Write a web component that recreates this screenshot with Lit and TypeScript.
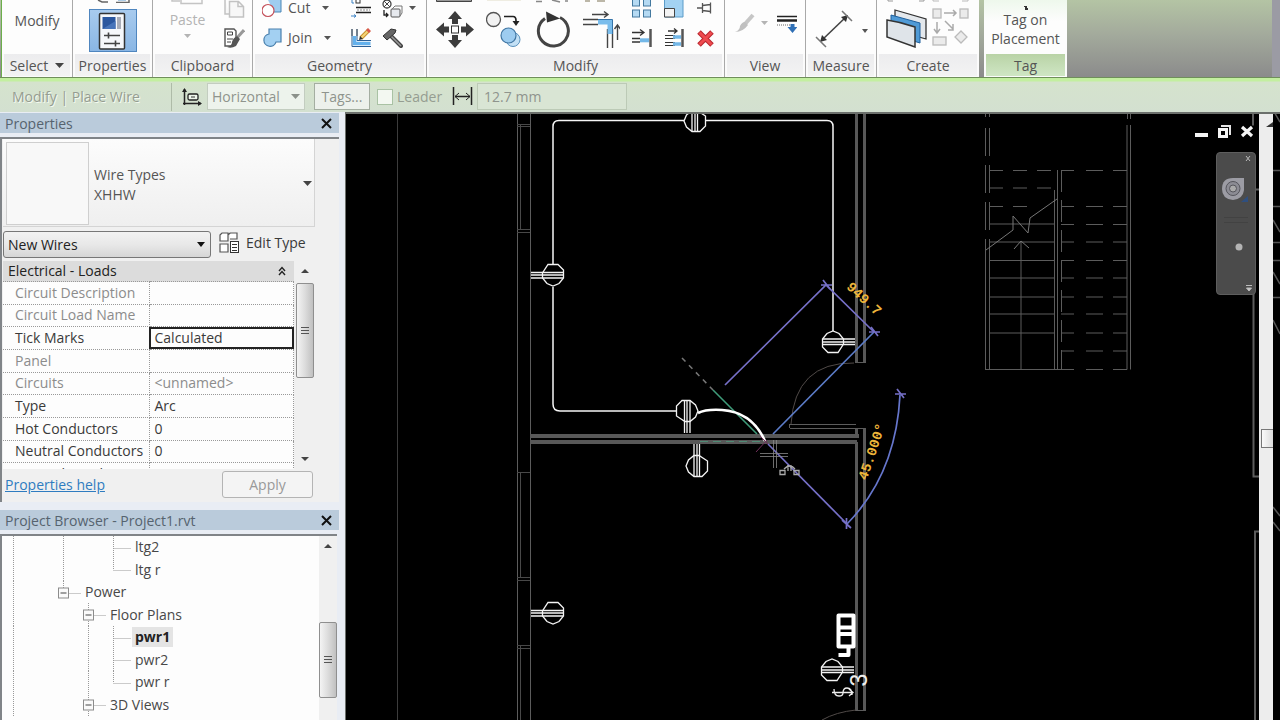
import { LitElement, html, svg, css, nothing, TemplateResult } from "lit";
import { customElement } from "lit/decorators.js";
import { classMap } from "lit/directives/class-map.js";

type Box = [number, number, number, number];

const icon = ([x, y, w, h]: Box, body: TemplateResult) =>
  html`<svg class="icon" width=${w} height=${h} viewBox="${x} ${y} ${w} ${h}" aria-hidden="true">${body}</svg>`;

const caret = html`<svg class="icon" width="7" height="4" viewBox="0 0 7 4" aria-hidden="true"><path d="M0 0h7L3.5 4z" fill="currentColor" /></svg>`;

const shared = css`
  * { box-sizing: border-box; }
  .icon { display: block; flex: none; }
  button {
    font: inherit; color: inherit; background: none; border: 0; padding: 0; margin: 0;
    display: flex; align-items: center;
  }
  .scroll {
    width: 18px; flex: none; background: #f0f0f0; color: #333;
    display: flex; flex-direction: column; align-items: center; justify-content: space-between;
    padding: 8px 0; position: relative;
  }
  .thumb {
    position: absolute; left: 0; width: 18px; border: 1px solid #8f8f8f; border-radius: 2px;
    background: linear-gradient(90deg, #f4f4f4, #dcdcdc 50%, #c0c0c0);
    display: flex; align-items: center; justify-content: center;
  }
  .titlebar {
    height: 20px; display: flex; align-items: center; justify-content: space-between;
    background: #bacbdb; color: #56636f; padding: 0 7px 0 5px; margin: 0 6px 0 0;
    font-size: 14px; font-weight: 400;
  }
  h2 { font: inherit; margin: 0; }
  .close { color: #111; }
`;

const grip = html`<svg class="icon" width="8" height="10" viewBox="0 0 8 10"><path d="M0 1.5h8M0 4.5h8M0 7.5h8" stroke="#555" /></svg>`;
const up = html`<svg class="icon" width="8" height="4" viewBox="0 0 8 4"><path d="M0 4h8L4 0z" fill="#444" /></svg>`;
const down = html`<svg class="icon" width="8" height="4" viewBox="0 0 8 4"><path d="M0 0h8L4 4z" fill="#444" /></svg>`;
const cross = html`<svg class="icon" width="11" height="11" viewBox="0 0 11 11"><path d="M1 1l9 9M10 1l-9 9" stroke="#111" stroke-width="2" /></svg>`;

@customElement("ribbon-bar")
class RibbonBar extends LitElement {
  static styles = [shared, css`
    :host {
      display: flex; height: 77px; overflow: hidden; color: #555; font-size: 14px;
      background: linear-gradient(180deg, #b4c4a4, #a3aa9c 45%, #8b8b8b);
      padding-left: 1px;
    }
    section { display: flex; flex-direction: column; border-right: 1px solid #a9a9a9; background: #fdfdfd; flex: none; }
    section:first-child { border-left: 1px solid #6cae4c; }
    .body { height: 54px; display: flex; align-items: flex-end; justify-content: center; padding-bottom: 6px; }
    h2 {
      height: 23px; margin: 0; font-size: 14px; font-weight: 400; line-height: 23px; text-align: center;
      background: linear-gradient(180deg, #ececee, #f3f3f3); border: solid #fbfbfb; border-width: 0 2px 1px;
      display: flex; gap: 7px; align-items: center; justify-content: center;
    }
    .select { width: 72px; } .properties { width: 80px; } .clipboard { width: 100px; }
    .geometry { width: 174px; } .modify { width: 298px; } .view { width: 81px; }
    .measure { width: 71px; } .create { width: 102px; border-right: 0; } .tag { width: 83px; margin-left: 5px; border-right: 0; }
    .tag h2 { background: linear-gradient(180deg, #b9d3a6, #cfe6c4); }
    .tag .body { background: linear-gradient(180deg, #eef8ec, #fdfdfd 40%); }
    .stack { display: flex; flex-direction: column; gap: 10px; }
    .row { gap: 6px; height: 20px; }
    .label { line-height: 20px; }
    .wide { gap: 8px; }
    .on { border: 1px solid #4f86bf; background: linear-gradient(180deg, #a8cbee, #8ab6e4); padding: 2px 8px; height: 43px; width: 48px; }
    .prop { padding-bottom: 2px; flex-direction: column; align-items: center; justify-content: flex-end; gap: 6px; }
    .dim { color: #b4b4b4; }
    .tall { flex-direction: column; justify-content: flex-end; text-align: center; line-height: 19px; }
    .paste { height: 48px; justify-content: flex-start; gap: 4px; line-height: 20px; padding-top: 0; }
    .end { flex: 1; border-right: 8px solid #9b9ba4; }
    .lift { padding-bottom: 24px; }
    .clip { gap: 18px; padding-left: 10px; }
    .geo { gap: 10px; justify-content: flex-start; padding-left: 9px; }
    .ops { width: 78px; }
    .mod { gap: 12px; justify-content: flex-start; padding-left: 9px; }
    .viewg { gap: 8px; align-items: flex-start; padding-bottom: 0; padding-top: 13px; }
    .viewg button { height: 20px; gap: 6px; }
  `];

  render() {
    return html`
      <section class="select">
        <div class="body lift"><button>Modify</button></div>
        <h2>Select <svg class="icon" width="9" height="5" viewBox="0 0 9 5"><path d="M0 0h9L4.500 5z" fill="#444" /></svg></h2>
      </section>
      <section class="properties">
        <div class="body prop">
          ${icon([96, 0, 34, 3], svg`<path d="M98 0l4 2h6M116 2.500h13V0" fill="none" stroke="#666" stroke-width="1.500"/><path d="M118 0h8" stroke="#5b9ad0"/>`)}
          <button class="on" aria-label="Properties">
            ${icon([97, 10, 28, 38], svg`
              <rect x="98.500" y="11.500" width="25" height="35.500" rx="1" fill="#f6f8fb" stroke="#333" stroke-width="1.500"/>
              <rect x="101.500" y="15" width="13" height="12" fill="#2b579f"/><path d="M101.500 27l13-8v8z" fill="#4774ba"/>
              <rect x="116" y="15" width="4" height="12" fill="#a9adb8"/>
              <path d="M103 33.500h16M103 41.500h16M107.500 30.500v6M114.500 38.500v6" stroke="#444" stroke-width="1.600"/>`)}
          </button>
        </div>
        <h2>Properties</h2>
      </section>
      <section class="clipboard">
        <div class="body clip">
          <button class="tall paste dim">
            ${icon([170, 0, 34, 6], svg`<path d="M172 0v1h8M181 0v3.500h21V0" fill="none" stroke="#c4c4c4" stroke-width="1.500"/>`)}
            <span class="label">Paste</span>${caret}
          </button>
          <div class="stack">
            <button aria-label="Copy">${icon([223, -2, 22, 20], svg`<path d="M225 -2v16h4M229.500 1.500h9l5 5v10.500h-14zM238 1.500v5h5" fill="#f7f7f7" stroke="#c2c2c2" stroke-width="1.500"/>`)}</button>
            <button aria-label="Match type">${icon([223, 28, 22, 20], svg`
              <path d="M225 29h9l2 2v9l-3 6h-8z" fill="#fff" stroke="#555" stroke-width="1.400"/><path d="M227.500 32h5v3h-5zM227 39h6M227 42h4" fill="none" stroke="#444"/>
              <path d="M244 30l-8 9" stroke="#999" stroke-width="3"/><path d="M237 36l3 3-4 7q-5 3-9 1 5-1 5-5 1-4 5-6z" fill="#555"/>`)}</button>
          </div>
        </div>
        <h2>Clipboard</h2>
      </section>
      <section class="geometry">
        <div class="body geo">
          <div class="stack ops">
            <button class="row">${icon([262, -2, 20, 20], svg`
              <path d="M267 -2h14v14h-7" fill="#9fcdf0" stroke="#4b86b5"/><circle cx="268" cy="10.500" r="6" fill="#fff" stroke="#c4505a" stroke-width="1.200"/>`)}
              <span class="label">Cut</span><span class="icon"></span>${caret}</button>
            <button class="row">${icon([262, 28, 20, 20], svg`
              <path d="M269 29h12v13h-5a6.200 6.200 0 1 1-7-8z" fill="#a3d0f2" stroke="#4a80ad" stroke-width="1.200"/>`)}
              <span class="label">Join</span><span class="icon"></span>${caret}</button>
          </div>
          <div class="stack">
            <button aria-label="Cope">${icon([350, -2, 22, 20], svg`
              <rect x="356" y="-1" width="4" height="4" fill="#fff" stroke="#333"/><path d="M352 0v3h2" stroke="#3c82c4" fill="none"/><path d="M356 7.500h15M356 12.500h15" stroke="#222" stroke-width="1.400"/><path d="M357 10h13" stroke="#888" stroke-dasharray="2 1"/><path d="M351 16h5l-2-1.500M356 16l-2 1.500" stroke="#3c82c4" fill="none"/>`)}</button>
            <button aria-label="Wall joins">${icon([350, 28, 22, 20], svg`
              <path d="M352 29v17.500h19M357 29v11.500h14" fill="none" stroke="#2b5f96"/><path d="M354.500 36v7.500h16" fill="none" stroke="#64b1ec" stroke-width="3.500"/><path d="M352 29v7M357 29v7" stroke="#555"/>
              <path d="M361 38l8-8" stroke="#c9912f" stroke-width="4"/><path d="M361 38l8-8" stroke="#f5d679" stroke-width="2"/><path d="M359 40l1-4 3 3z" fill="#333"/><path d="M367.500 31.500l2-2" stroke="#d9584e" stroke-width="4"/>`)}</button>
          </div>
          <div class="stack">
            <button class="row">${icon([382, -2, 21, 20], svg`
              <circle cx="387" cy="4" r="4" fill="#fff" stroke="#444" stroke-width="1.300"/><path d="M384 1l6 6M390 1l-6 6" stroke="#444"/>
              <rect x="391" y="9" width="9" height="8" rx="1" fill="#e6e9ee" stroke="#555"/><path d="M392 9l3-3h7v7l-2 3" fill="none" stroke="#777"/><path d="M384 10v5h4m-2-2l2 2-2 2" fill="none" stroke="#222" stroke-width="1.300"/>`)}
              ${caret}</button>
            <button aria-label="Demolish">${icon([382, 28, 21, 20], svg`
              <path d="M391 36l10 10" stroke="#444" stroke-width="4" stroke-linecap="round"/><path d="M391 36l10 10" stroke="#9a9a9a" stroke-width="1.500"/>
              <path d="M383 36l8-7 5 1-1 3-8 7z" fill="#666" stroke="#333"/>`)}</button>
          </div>
        </div>
        <h2>Geometry</h2>
      </section>
      <section class="modify">
        <div class="body mod">
          <button aria-label="Move">${icon([436, 0, 38, 48], svg`
            <path d="M436.500 0v1.500h35V0" fill="#999" stroke="#444"/>
            <path d="M455 11l7 8h-4v5h-6v-5h-4zM455 48l7-8h-4v-5h-6v5h-4zM436 29.500l8-7v4h5v6h-5v4zM474 29.500l-8-7v4h-5v6h5v4z" fill="#3c3c3c"/>
            <rect x="451.500" y="26" width="7" height="7" fill="#fff" stroke="#333"/>`)}</button>
          <button aria-label="Copy">${icon([486, 0, 36, 48], svg`
            <path d="M487 0h34" stroke="#e2ddc8"/>
            <circle cx="493.500" cy="19.500" r="7" fill="#f2f2f2" stroke="#555" stroke-width="1.300"/>
            <path d="M504 16.500h9q3 0 3 4v3" fill="none" stroke="#222" stroke-width="1.700"/><path d="M512.500 21h7l-3.500 5z" fill="#222"/>
            <circle cx="513" cy="39.500" r="7" fill="#c3e0f5" stroke="#5a92bd"/><circle cx="508.500" cy="35.500" r="7.500" fill="#9dccf0" stroke="#4176a3" stroke-width="1.200"/>`)}</button>
          <button aria-label="Rotate">${icon([534, 0, 36, 48], svg`
            <path d="M536 1.500h6M552 0l8 2M565 1h3" stroke="#888" stroke-width="1.500"/>
            <path d="M545 18.500a15 15 0 1 0 15-1" fill="none" stroke="#444" stroke-width="3"/><path d="M546 11.500l14 7-13 4z" fill="#333"/>`)}</button>
          <button aria-label="Trim or extend">${icon([582, 0, 38, 48], svg`
            <path d="M585 1h5M597 1h8" stroke="#a6a08c" stroke-width="1.500"/>
            <path d="M592 14.500h16m-4-3l4 3-4 3" fill="none" stroke="#444" stroke-width="1.400"/>
            <path d="M583 19.500h15M583 24.500h15M607.500 29v19M612.500 29v19" stroke="#444" stroke-width="1.400"/>
            <path d="M598 22h12v12" fill="none" stroke="#7abdec" stroke-width="5"/><path d="M598 19.500h14.500V34" fill="none" stroke="#3674a8"/>
            <path d="M617.500 40V25m-3 4l3-4 3 4" fill="none" stroke="#444" stroke-width="1.400"/>`)}</button>
          <div class="stack">
            <button aria-label="Array">${icon([634, -2, 20, 20], svg`
              <g fill="#b5daf3" stroke="#44799f"><rect x="634.500" y="-2" width="7" height="8"/><rect x="645.500" y="-2" width="7" height="8"/><rect x="634.500" y="10" width="7" height="7"/><rect x="645.500" y="10" width="7" height="7"/></g>`)}</button>
            <button aria-label="Trim single">${icon([634, 28, 20, 20], svg`
              <path d="M634 32.500h12m-4-3l4 3-4 3M634 38.500h8M634 42h8" fill="none" stroke="#333" stroke-width="1.300"/><path d="M642 40.300h9" stroke="#74b8e8" stroke-width="4"/><path d="M652.500 29v18" stroke="#555" stroke-width="2.500"/>`)}</button>
          </div>
          <div class="stack">
            <button aria-label="Scale">${icon([665, -2, 20, 20], svg`
              <path d="M665.500 -2h18.500v19h-18.500z" fill="#a3d2f2" stroke="#5b9cc9"/><path d="M665.500 8.500h10v8.500h-10z" fill="#f4f4f4" stroke="#444"/>`)}</button>
            <button aria-label="Trim multiple">${icon([665, 28, 20, 20], svg`
              <path d="M669 31h9m-3-2.500l3 2.500-3 2.500" fill="none" stroke="#333" stroke-width="1.300"/><path d="M666 35.500h10M666 38.500h10M666 42.500h10M666 45.500h10" stroke="#333"/><path d="M674 37h8M674 44h8" stroke="#74b8e8" stroke-width="3.500"/><path d="M683.500 29v18" stroke="#555" stroke-width="2.500"/>`)}</button>
          </div>
          <div class="stack">
            <button aria-label="Pin">${icon([697, -2, 20, 20], svg`
              <path d="M698 8h5M703.500 3v10M711.500 2.500v11M703.500 5.500l8-1M703.500 10.500l8 1" fill="none" stroke="#555" stroke-width="1.300"/>`)}</button>
            <button aria-label="Delete">${icon([697, 28, 20, 20], svg`
              <path d="M700 32l13 13M713 32l-13 13" stroke="#b8262e" stroke-width="5"/><path d="M700.500 32.500l12 12M712.500 32.500l-12 12" stroke="#ee4a4f" stroke-width="3"/>`)}</button>
          </div>
        </div>
        <h2>Modify</h2>
      </section>
      <section class="view">
        <div class="body viewg">
          <button class="dim">${icon([734, 13, 21, 20], svg`<path d="M753 15l-8 9" stroke="#c6c6c6" stroke-width="4"/><path d="M745 22l3 3q-5 7-13 7 5-2 5-6 2-4 5-4z" fill="#c0c0c0"/>`)}${caret}</button>
          <button aria-label="Thin lines">${icon([777, 13, 21, 20], svg`<path d="M778 16.500h20" stroke="#222" stroke-width="1.500"/><path d="M778 20.500h20" stroke="#222" stroke-width="2.500"/><path d="M778 25h14" stroke="#666" stroke-dasharray="1 1"/><path d="M788.500 27h3v-3h4v3h3l-5 6z" fill="#2f6fb5"/>`)}</button>
        </div>
        <h2>View</h2>
      </section>
      <section class="measure">
        <div class="body wide">
          <button aria-label="Measure">${icon([815, 10, 39, 38], svg`
            <path d="M821 41l26-25" stroke="#444" stroke-width="1.600"/><path d="M820 42l2-7 5 5zM848 15l-2 7-5-5z" fill="#333"/><path d="M816 37l10 10M842 11l10 10" stroke="#777" stroke-width="1.500"/>`)}</button>
          ${icon([861, 10, 6, 38], svg`<path d="M861 29h6l-3 4z" fill="#555"/>`)}
        </div>
        <h2>Measure</h2>
      </section>
      <section class="create">
        <div class="body">
          <button aria-label="Create assembly">${icon([883, 0, 44, 50], svg`
            <path d="M886 0v3h5M922 0v3h-5" fill="none" stroke="#999"/>
            <path d="M893 12l31 9v20l-31-9z" fill="#e4e8ec" stroke="#333" stroke-width="1.300"/>
            <path d="M889 17l29 8v20l-29-9z" fill="#4f9ad6" stroke="#1e5f9c"/>
            <path d="M885 22q14 2 28 7v20l-28-10z" fill="#dfe4e9" stroke="#333" stroke-width="1.500"/>`)}</button>
          <button aria-label="Create similar">${icon([929, 0, 42, 50], svg`
            <path d="M933 0v3h6M968 0v3h-6" fill="none" stroke="#bbb"/>
            <g fill="#ebebeb" stroke="#bbb" stroke-width="1.300"><rect x="933" y="11" width="8" height="9"/><rect x="960" y="11" width="8" height="9"/><rect x="933" y="39" width="13" height="8"/><path d="M961 33l6 6-6 6-6-6z"/></g>
            <path d="M944 15h12m-3-3l3 3-3 3M937 24v10m-3-3l3 4 3-4M945 23l8 8m0-5v6h-5" fill="none" stroke="#aaa" stroke-width="1.500"/>`)}</button>
        </div>
        <h2>Create</h2>
      </section>
      <section class="tag">
        <div class="body"><button class="tall">
          ${icon([1004, 0, 6, 4], svg`<path d="M1006 0h2v3h2" fill="none" stroke="#333" stroke-width="2"/>`)}
          <span class="icon"></span><span>Tag on</span><span>Placement</span></button></div>
        <h2>Tag</h2>
      </section>
      <div class="end"></div>`;
  }
}

@customElement("options-bar")
class OptionsBar extends LitElement {
  static styles = [shared, css`
    :host {
      display: flex; align-items: center; height: 35px; padding: 3px 0 0; color: #959d91; font-size: 14px;
      background: linear-gradient(180deg, #c3efa0 3px, #d5e3cd 4px, #d3e0d0);
      border-top: 1px solid #6f8f5a;
    }
    .mode { width: 172px; padding-left: 12px; height: 28px; line-height: 27px; border-right: 1px solid #aebba8; text-shadow: 1px 1px 0 #f4faf0; margin-right: 9px; }
    label { display: flex; align-items: center; gap: 4px; }
    select, input.text, .tags {
      font: inherit; color: #8f948d; height: 27px; border: 1px solid #c3cdc0; margin: 0; opacity: 1;
    }
    .pick { position: relative; display: flex; align-items: center; }
    .pick select { width: 98px; appearance: none; background: #edf3ec; padding: 0 0 0 4px; }
    .pick svg { position: absolute; right: 5px; color: #8b918a; }
    .tags { width: 56px; margin: 0 7px 0 9px; background: #edf1ec; border-color: #a4aea1; justify-content: center; }
    .check { appearance: none; width: 16px; height: 16px; border: 1px solid #a9c2a4; background: #f3f8f1; margin: 0; }
    .leader { margin-right: 10px; }
    input.text { width: 150px; background: #d9e5d4; padding: 0 6px; border-color: #eaf3e6; outline: 1px solid #bccab6; outline-offset: -1px; }
  `];
  render() {
    return html`
      <div class="mode">Modify | Place Wire</div>
      <label>${icon([182, 85, 22, 20], svg`<path d="M185.500 87v16M184 101.500h18" stroke="#222" stroke-width="1.500"/><path d="M183 90l2.500-4 2.500 4zM199 99l4 2.500-4 2.500z" fill="#222"/><rect x="189" y="92" width="10" height="6" rx="1.500" fill="#eef5ea" stroke="#222" stroke-width="1.300"/><path d="M192 95h4" stroke="#333"/>`)}
        <span class="pick"><select disabled aria-label="Orientation"><option>Horizontal</option></select>
        <svg width="9" height="5" viewBox="0 0 9 5"><path d="M0 0h9L4.500 5z" fill="currentColor" /></svg></span></label>
      <button class="tags" disabled>Tags...</button>
      <label class="leader"><input class="check" type="checkbox" disabled />Leader</label>
      <label>${icon([452, 86, 21, 20], svg`<path d="M453.500 86v18M471.500 86v18M455 95.500h15" stroke="#222" stroke-width="1.500"/><path d="M459 92l-4 3.500 4 3.500M466 92l4 3.500-4 3.500" fill="none" stroke="#222"/>`)}
        <input class="text" disabled aria-label="Leader length" value="12.7 mm" /></label>`;
  }
}

interface Prop { name: string; value: string; dim?: boolean; active?: boolean; }

const PROPS: Prop[] = [
  { name: "Circuit Description", value: "", dim: true },
  { name: "Circuit Load Name", value: "", dim: true },
  { name: "Tick Marks", value: "Calculated", active: true },
  { name: "Panel", value: "", dim: true },
  { name: "Circuits", value: "<unnamed>", dim: true },
  { name: "Type", value: "Arc" },
  { name: "Hot Conductors", value: "0" },
  { name: "Neutral Conductors", value: "0" },
  { name: "Ground Conductors", value: "0" },
];

@customElement("properties-panel")
class PropertiesPanel extends LitElement {
  static styles = [shared, css`
    :host { display: block; color: #3a3a3a; font-size: 14px; }
    .panel { margin: 4px 6px 0 0; border: 2px solid #808488; border-width: 2px 0 0 2px; background: #f0f0f0; padding: 0 0 4px 1px; }
    .type {
      width: 312px; height: 88px; border: 1px solid #d4d4d4; border-width: 0 1px 1px 0;
      background: linear-gradient(180deg, #fcfcfc, #efefef); padding: 3px 2px 2px 3px; gap: 5px; text-align: left; line-height: 20px; color: #555;
    }
    .preview { width: 83px; height: 83px; border: 1px solid #cfcfcf; background: #f8f8f8; }
    .names { flex: 1; padding-top: 3px; }
    .names span { display: block; }
    .row { display: flex; align-items: center; gap: 8px; padding: 4px 0 3px; }
    .pick { position: relative; display: flex; align-items: center; }
    .pick svg { position: absolute; right: 6px; }
    select {
      appearance: none; font: inherit; color: #222; width: 208px; height: 27px; padding: 0 4px; margin: 0;
      border: 1px solid #777; border-radius: 3px; background: linear-gradient(180deg, #f2f2f2, #e8e8e8 50%, #d6d6d6);
    }
    .edit { gap: 7px; color: #3a3a3a; padding-bottom: 4px; }
    .grid { display: flex; height: 208px; overflow: hidden; gap: 2px; }
    .clip { width: 291px; overflow: hidden; }
    table { width: 291px; height: 225px; border-collapse: collapse; table-layout: fixed; background: #fdfdfd; }
    col.name { width: 146px; }
    td, th { padding: 0; font-weight: 400; text-align: left; line-height: 20px; white-space: nowrap; }
    tbody th { padding-left: 12px; border: 1px dotted #999; border-left: 0; }
    td { padding-left: 5px; border: 1px dotted #999; }
    thead th { background: #dcdcdc; padding: 0 8px 0 5px; color: #222; }
    .head { display: flex; align-items: center; justify-content: space-between; }
    .dim { color: #8c8c8c; }
    td.active { outline: 2px solid #222; outline-offset: -2px; }
    .thumb { top: 22px; height: 95px; }
    .foot { display: flex; align-items: center; justify-content: space-between; padding: 2px 26px 0 2px; }
    a { color: #2f7cc0; }
    .apply { width: 91px; height: 27px; justify-content: center; border: 1px solid #b4b4b4; border-radius: 3px; background: #f4f4f4; color: #999; }
  `];
  render() {
    return html`
      <header class="titlebar"><h2>Properties</h2><button class="close" aria-label="Close">${cross}</button></header>
      <div class="panel">
        <button class="type"><span class="preview"></span>
          <span class="names"><span>Wire Types</span><span>XHHW</span></span>
          <svg class="icon" width="9" height="5" viewBox="0 0 9 5"><path d="M0 0h9L4.500 5z" fill="#444" /></svg></button>
        <div class="row">
          <span class="pick"><select aria-label="Element filter"><option>New Wires</option></select>
            <svg width="8" height="5" viewBox="0 0 8 5"><path d="M0 0h8L4 5z" fill="#111" /></svg></span>
          <button class="edit">${icon([219, 233, 20, 21], svg`
            <path d="M220 236l2-2h6v8h-8zM230 234h7v6h-7M220 245h8v8h-8zM228 236l2-2" fill="#fff" stroke="#555" stroke-width="1.200"/>
            <rect x="230.500" y="242.500" width="8" height="11" fill="#fff" stroke="#333"/><path d="M232 245.500h5M232 248.500h5M232 251.500h5" stroke="#333"/>`)}Edit Type</button>
        </div>
        <div class="grid">
          <div class="clip"><table>
            <colgroup><col class="name" /><col /></colgroup>
            <thead><tr><th colspan="2"><div class="head">Electrical - Loads
              <svg class="icon" width="8" height="10" viewBox="0 0 8 10"><path d="M1 5l3-3.500L7 5M1 9l3-3.500L7 9" fill="none" stroke="#222" stroke-width="1.400" /></svg></div></th></tr></thead>
            <tbody>${PROPS.map((p) => html`<tr class=${classMap({ dim: !!p.dim })}><th scope="row">${p.name}</th><td class=${classMap({ active: !!p.active })}>${p.value}</td></tr>`)}</tbody>
          </table></div>
          <div class="scroll">${up}<div class="thumb">${grip}</div>${down}</div>
        </div>
        <div class="foot"><a href="#help">Properties help</a><button class="apply" disabled>Apply</button></div>
      </div>`;
  }
}

type Guide = "" | "line" | "tee" | "end" | "box" | "boxend";
interface Node { label: string; guides: Guide[]; current?: boolean; }

const TREE: Node[] = [
  { label: "ltg2", guides: ["line", "", "line", "", "tee"] },
  { label: "ltg r", guides: ["line", "", "line", "", "end"] },
  { label: "Power", guides: ["line", "", "boxend"] },
  { label: "Floor Plans", guides: ["line", "", "", "box"] },
  { label: "pwr1", guides: ["line", "", "", "line", "tee"], current: true },
  { label: "pwr2", guides: ["line", "", "", "line", "tee"] },
  { label: "pwr r", guides: ["line", "", "", "line", "end"] },
  { label: "3D Views", guides: ["line", "", "", "box"] },
];

const guide = (g: Guide, i: number) => {
  const x = 11 + i * 25 + 0.5;
  const box = g === "box" || g === "boxend";
  return svg`
    ${g ? svg`<path class="dots" d="M${x} 0v${g === "end" || g === "boxend" ? 12 : 23}"/>` : nothing}
    ${box || g === "tee" || g === "end" ? svg`<path class="dots" d="M${x} 12.500h18"/>` : nothing}
    ${box ? svg`<rect x=${x - 5} y="7" width="10" height="10" fill="#fafafa" stroke="#8c8c8c"/><path d="M${x - 3} 12h6" stroke="#444"/>` : nothing}`;
};

@customElement("project-browser")
class ProjectBrowser extends LitElement {
  static styles = [shared, css`
    :host { display: flex; flex-direction: column; flex: 1; min-height: 0; color: #484848; font-size: 14px; }
    .titlebar { flex: none; }
    .panel { flex: 1; min-height: 0; display: flex; margin: 4px 8px 0 0; border: 2px solid #808488; border-width: 2px 0 0 2px; background: #fdfdfd; overflow: hidden; }
    ul { flex: 1; height: 180px; list-style: none; margin: 0; padding: 0; display: grid; grid-template-rows: repeat(8, 1fr); }
    li { display: flex; align-items: center; min-height: 0; line-height: 20px; }
    .guides { display: block; flex: none; height: 23px; }
    .dots { stroke: #999; stroke-dasharray: 1 1; fill: none; }
    .current { font-weight: 700; background: #e4e4e4; color: #222; }
    .name { padding: 0 3px; }
    .thumb { top: 86px; height: 76px; }
  `];
  render() {
    return html`
      <header class="titlebar"><h2>Project Browser - Project1.rvt</h2><button class="close" aria-label="Close">${cross}</button></header>
      <div class="panel">
        <ul>${TREE.map((n) => html`<li>
          <svg class="guides" width=${n.guides.length * 25 + 5} height="23" aria-hidden="true">${n.guides.map(guide)}</svg>
          <span class=${classMap({ name: true, current: !!n.current })}>${n.label}</span></li>`)}</ul>
        <div class="scroll">${up}<div class="thumb">${grip}</div></div>
      </div>`;
  }
}

/* Duplex receptacle: octagon with paired leads running toward its wall. */
const receptacle = (x: number, y: number, angle: number) => svg`
  <g transform="translate(${x} ${y}) rotate(${angle})" fill="none" stroke="#f4f4f4" stroke-width="1.300">
    <path d="M-5 -10.500h10l5.500 5.500v8l-4.500 5.500-6 2.500-6-2.500-4.500-5.500v-5z"/>
    <path d="M-22 -2.500h33M-22 0h33M-22 3h32" />
  </g>`;

const tick = (x: number, y: number) => svg`<path d="M${x - 5} ${y + 1}h11M${x - 3} ${y - 4}l7 9" />`;

const leftTreads = [224, 242, 260.5, 278, 297, 314, 333];
const rightTreads = [170.5, 206.5, 224.5, 242, 260.5, 278, 297, 314, 333, 351, 369.5];

@customElement("plan-view")
class PlanView extends LitElement {
  static styles = [shared, css`
    :host { display: flex; flex: 1; min-width: 0; position: relative; background: #000; border: 2px solid #6c706c; border-width: 2px 0 0 1px; overflow: hidden; }
    .plan { display: block; flex: 1; min-width: 0; height: 100%; }
    .dim { font: 700 14px "Liberation Mono", monospace; fill: #edb53a; }
    .mark { font: 23px "Liberation Sans", sans-serif; fill: #eee; }
    .scroller { width: 14px; flex: none; background: #ededed; display: flex; flex-direction: column; align-items: flex-end; padding-top: 8px; }
    .knob { width: 12px; height: 19px; border: 1px solid #777; border-right: 0; background: linear-gradient(90deg, #fafafa, #dcdcdc); margin-top: 302px; }
    .edge { width: 7px; flex: none; height: 100%; display: block; }
    .tools { position: absolute; top: 11px; right: 26px; display: flex; gap: 9px; }
    .nav {
      position: absolute; top: 38px; right: 24px; width: 40px; height: 143px; border: 1px solid #5e5e5e; border-radius: 4px; background: #4b4b4b;
      display: flex;
    }
  `];
  render() {
    return html`
      <svg class="plan" aria-label="Floor plan pwr1"><g transform="translate(-346 -114)">
        <g fill="none" stroke="#5c5c5c" shape-rendering="crispEdges">
          <path d="M397.500 114V720" stroke="#3c3c3c"/>
          <path d="M517.500 114V720M530.500 114V720"/>
          <path d="M520.500 125V230M520.500 472V578M520.500 646V720M517 124.500h13M517 126.500h13M517 229.500h13M517 232.500h13M517 472.500h13M517 577.500h13M517 580.500h13M517 645.500h13M517 648.500h13" stroke="#484848"/>
          <path d="M530 436h329M530 442h327" stroke="#585858" stroke-width="4"/>
          <path d="M856 114V362M864 114V362M856 428V438M864 428V710M856 442V710" stroke="#585858" stroke-width="3"/>
          <path d="M854.500 362.500h11M855 428.500h10M855 710.500h11"/>
          <path d="M789.500 424.500h66M789.500 428.500h66M789.500 424v4"/>
        </g>
        <g fill="none" stroke="#5c5c5c">
          <path d="M791 424Q795 362 854 363M822 720q14-8 34-10" stroke="#504a48"/>
          <path d="M985.500 242V369.500M989.500 242V369.500M1054.500 190V369.500M1057.500 170V369.500M1127 125V369.500M1130.500 125V369.500M1021 242V369.500"/>
          <path d="M985.500 128V242M989.500 128V242" stroke-dasharray="28 9"/>
          <path d="M985.500 114v3M989.500 114v3"/>
          <path d="M1061.500 170V369" stroke-dasharray="22 8"/>
          <path d="M1127.500 114v5M1130.500 114v5"/>
          <path d="${leftTreads.map((y) => `M989 ${y}H1054`).join("")}M985 369.500H1062"/>
          <path d="M989 170.500H1058M989 188H1054M989 206.500H1030" stroke-dasharray="14 10"/>
          <path d="${rightTreads.map((y) => `M1061 ${y}H1074M1086 ${y}H1103M1113 ${y}H1127`).join("")}"/>
          <path d="M986 250l27-20v-14l15 17 2-15 27-19M1014 249l7-8 8 7" stroke="#777"/>
          <path d="M1254 124.500h-1V114M1259 189.500h-5.500V476.500h5.500M1259 531.500h-4V720" stroke-width="2"/>
        </g>
        <g fill="none" stroke="#f6f6f6" stroke-width="1.500">
          <path d="M684 120.500H559q-6 0-6 6V265M553 287V404q0 7 7 7H676M706 120.500H827q6 0 6 6V331"/>
        </g>
        ${receptacle(695, 121, 90)}${receptacle(553, 275, 0)}${receptacle(833, 342, 180)}
        ${receptacle(687, 411, 270)}${receptacle(697, 466, 90)}${receptacle(553, 613, 0)}${receptacle(832, 670, 180)}
        <path d="M682 358l31 32" stroke="#777" stroke-width="1.500" stroke-dasharray="5 5"/>
        <path d="M713 390l44 44" stroke="#3f9c7a" stroke-width="1.600"/>
        <path d="M700 441.500h62" stroke="#4f8a74" stroke-dasharray="8 5"/>
        <path d="M698 413q8-4 24-3 30 2 43 31" fill="none" stroke="#fff" stroke-width="2.600"/>
        <g fill="none" stroke="#7670c8" stroke-width="1.700">
          <path d="M725 385L826 285L874 332"/><path d="M874 332L773 434" stroke="#5c7cc8"/>
          <path d="M768 444L847 524"/><path d="M847 524Q896 474 900 395" stroke="#6676cc"/>
          ${tick(826, 284)}${tick(874, 331)}${tick(900, 393)}
          <path d="M846.500 518v11M842 520l9 8"/>
        </g>
        <path d="M756 452l11-12M760 436l8 8" stroke="#73305c"/>
        <path d="M760 453.500h28M760 456.500h28M773.500 440v28M776.500 440v28" stroke="#888" stroke-width=".8"/>
        <path d="M780 470.500h5v4h-5zM794 470.500h5v4h-5zM784 469q6-6 11 0M788 465v6M791 465v6" fill="none" stroke="#aaa" stroke-width="1.300"/>
        <text class="dim" text-anchor="middle" transform="translate(861 302) rotate(43)">949.7</text>
        <text class="dim" text-anchor="middle" transform="translate(876 453) rotate(-71)">45.000°</text>
        <path d="M838.500 615.500h15v31h-15zM838 627.500h15M838 634h15M848.500 648v7h-10" fill="none" stroke="#fff" stroke-width="4" stroke-linejoin="round"/>
        <text class="mark" text-anchor="middle" transform="translate(867 680) rotate(-90)">3</text>
        <path d="M832 692.500h21M834 689q0 7 5 7 4 0 4-3 0-5 4-5 5 0 5 7M849 689l4 3.500-4 3.500" fill="none" stroke="#eee" stroke-width="1.300"/>
      </g></svg>
      <div class="scroller"><svg class="icon" width="7" height="5" viewBox="0 0 7 5"><path d="M0 5h7V0z" fill="#333" /></svg><div class="knob"></div></div>
      <svg class="edge" aria-hidden="true"><path d="M0 56.500h7M0 92.500h7M0 128.500h7M0 146.500h7M0 183.500h7M0 -4l7 12M0 106l7 12M0 158l7 12M0 206l7 14M0 393l7 9M0 408l7 9" stroke="#555" stroke-width="1.500" fill="none"/></svg>
      <div class="tools">
        <button aria-label="Minimize">${icon([1195, 125, 15, 13], svg`<path d="M1196 135h13" stroke="#f4f4f4" stroke-width="4"/>`)}</button>
        <button aria-label="Restore">${icon([1218, 125, 13, 13], svg`<path d="M1221 126h9v9" fill="none" stroke="#e4e4e4" stroke-width="2"/><path d="M1219.500 129.500h7v7h-7z" fill="none" stroke="#f4f4f4" stroke-width="3"/>`)}</button>
        <button aria-label="Close">${icon([1240, 125, 14, 13], svg`<path d="M1242 127l10 9M1252 127l-10 9" stroke="#f4f4f4" stroke-width="3.200"/>`)}</button>
      </div>
      <button class="nav" aria-label="Navigation bar">${icon([1217, 153, 38, 141], svg`
        <path d="M1246 156l4 5M1250 156l-4 5" stroke="#bbb"/>
        <path d="M1222 189q0-11 11-11h11v12q-1 9-11 10-11-1-11-11z" fill="#9c9ca4"/><circle cx="1233" cy="188.500" r="7" fill="#8c8c94" stroke="#55555c"/><circle cx="1233" cy="188.500" r="3.500" fill="#aaa" stroke="#55555c"/>
        <path d="M1241 202h7v-6z" fill="#2f4f7f"/><path d="M1224 217.500h24M1224 222.500h24" stroke="#424242"/><circle cx="1239" cy="247" r="3.500" fill="#b4b4b4"/>
        <path d="M1246 285.500h6M1246.500 288h5l-2.500 3z" fill="#ccc" stroke="#bbb"/>`)}</button>`;
  }
}

@customElement("app-root")
class AppRoot extends LitElement {
  static styles = [shared, css`
    :host {
      display: flex; flex-direction: column; height: 100vh; overflow: hidden;
      font-family: "Open Sans", "Noto Sans", sans-serif; font-size: 14px; background: #e9edf2;
    }
    main { flex: 1; min-height: 0; display: flex; }
    aside { width: 345px; flex: none; display: flex; flex-direction: column; gap: 8px; padding-top: 1px; background: #e9edf4; min-height: 0; }
    ribbon-bar, options-bar { flex: none; }
  `];
  render() {
    return html`
      <ribbon-bar></ribbon-bar>
      <options-bar></options-bar>
      <main>
        <aside><properties-panel></properties-panel><project-browser></project-browser></aside>
        <plan-view></plan-view>
      </main>`;
  }
}
